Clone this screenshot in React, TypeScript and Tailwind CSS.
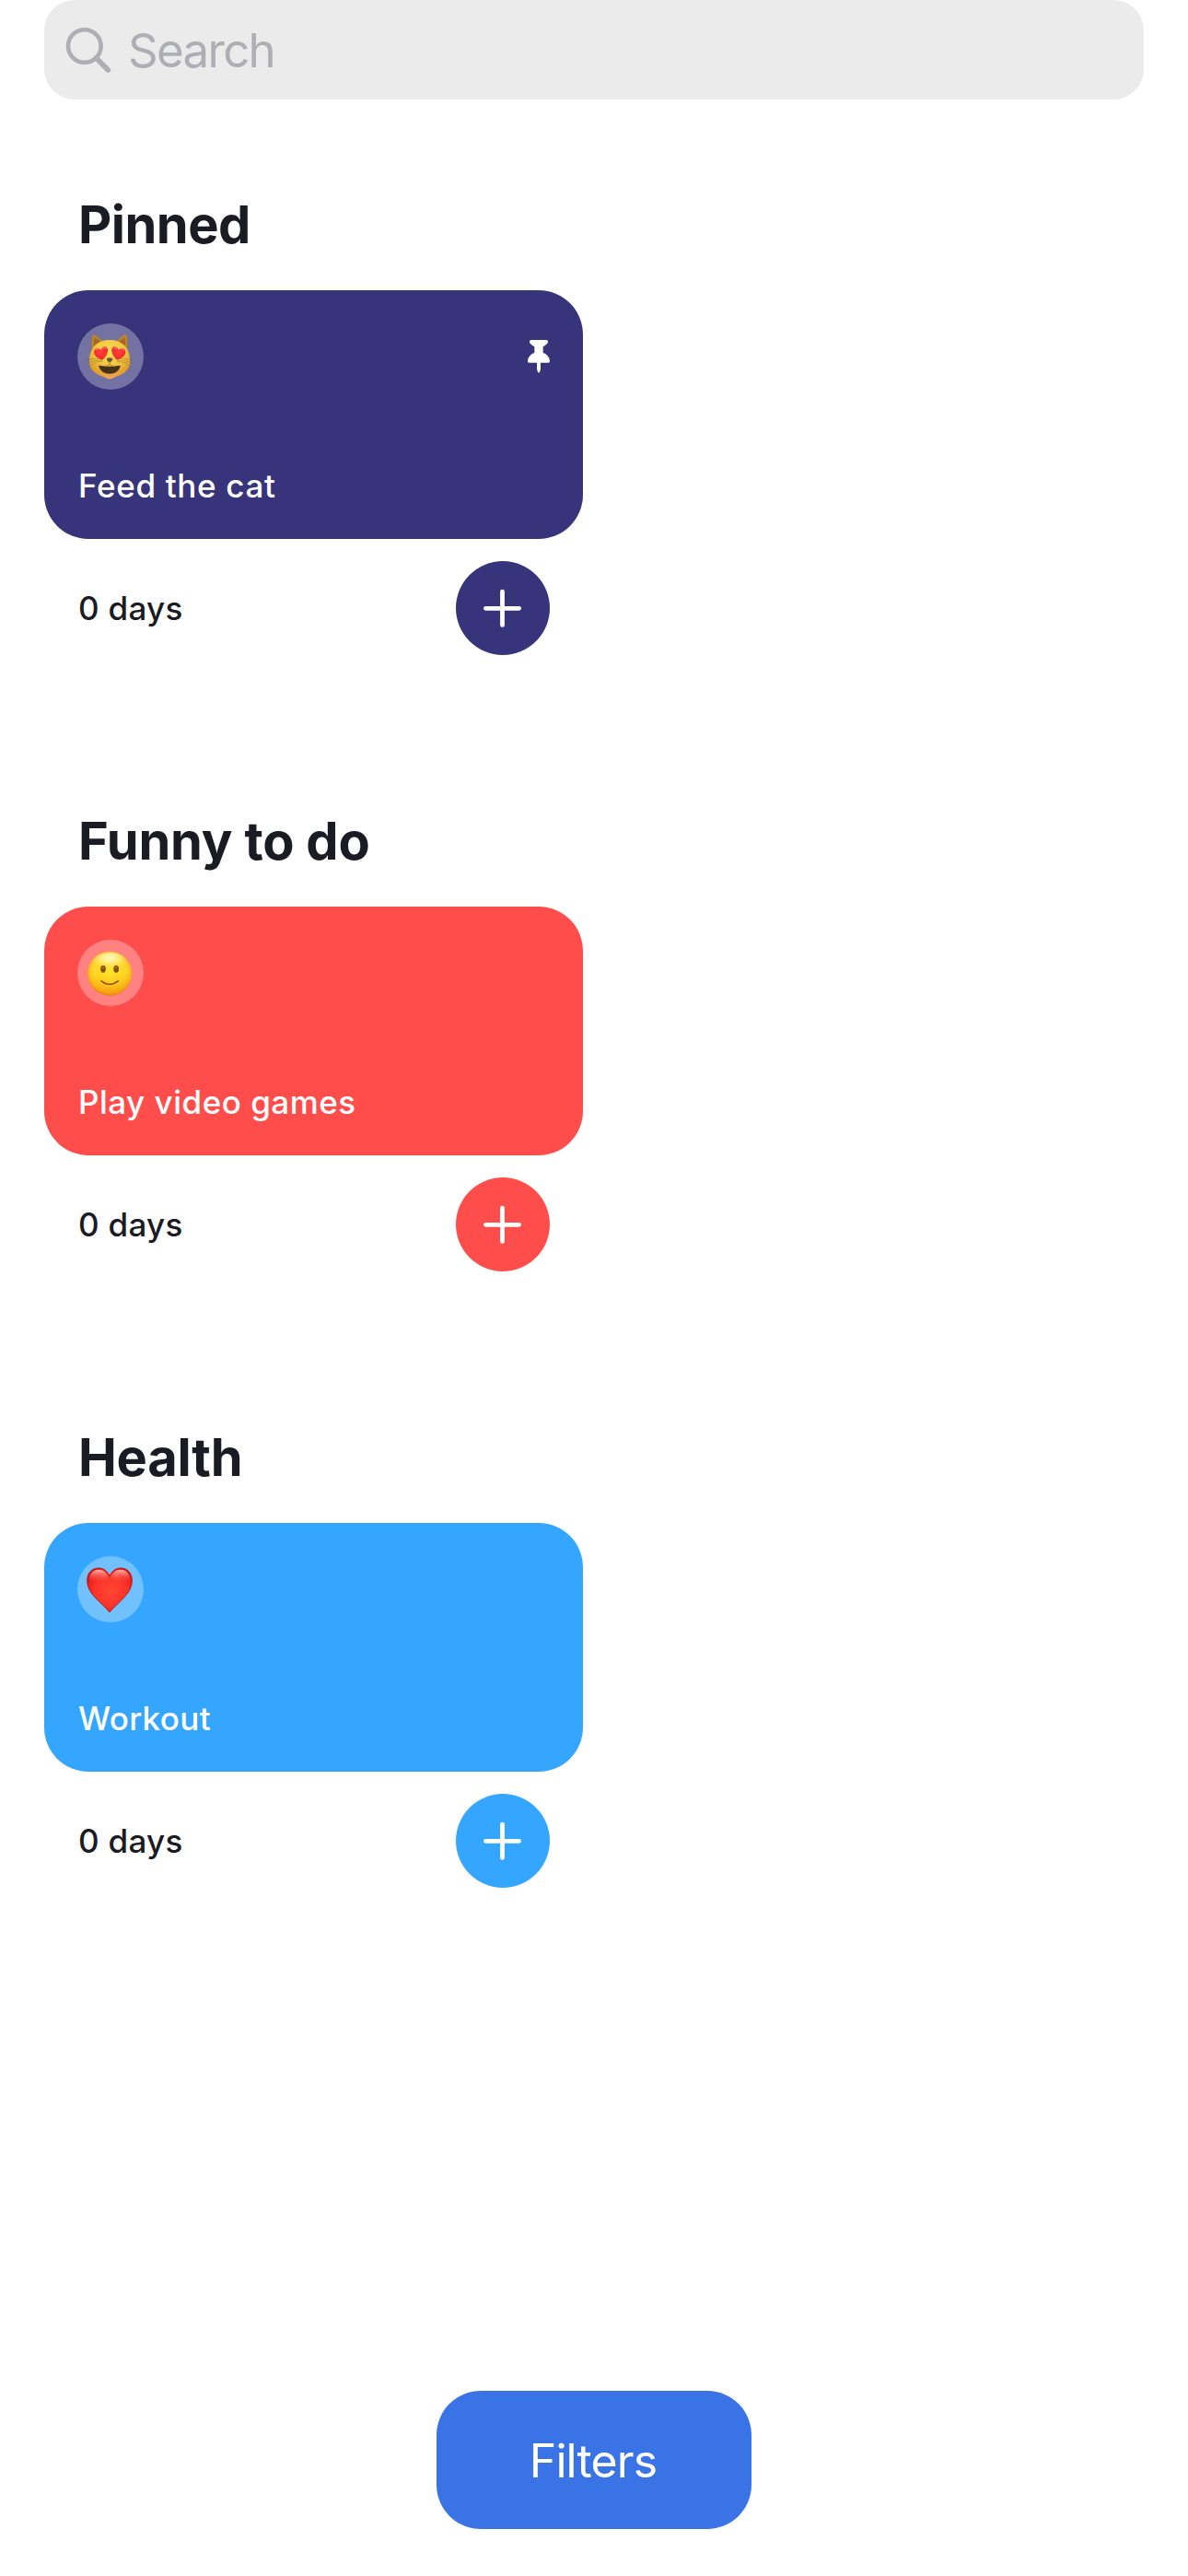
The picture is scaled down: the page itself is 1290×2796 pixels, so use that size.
import type { ReactNode } from "react";

function SearchIcon() {
  return (
    <svg className="h-[54px] w-[54px] shrink-0" viewBox="0 0 54 54" fill="none" stroke="#aeaeb5" aria-hidden="true">
      <circle cx="23.8" cy="23" r="17.8" strokeWidth="4.6" />
      <path d="M36.5 36 49.3 49" strokeWidth="5.6" strokeLinecap="round" />
    </svg>
  );
}

function PinIcon() {
  return (
    <svg className="h-9 w-6" viewBox="0 0 72 108" fill="#fff" aria-hidden="true">
      <path d="M12 0H61Q66 0 66 5V8Q65 12 50 22V42C62 46 72 56 72 70Q72 74 67 74H42V94Q41 104 36 108Q31 104 30 94V74H5Q0 74 0 70C0 56 10 46 22 42V22Q7 12 6 8V5Q6 0 12 0Z" />
    </svg>
  );
}

function PlusIcon() {
  return (
    <svg className="h-[42px] w-[42px]" viewBox="0 0 42 42" stroke="#fff" strokeWidth="4.8" strokeLinecap="round" aria-hidden="true">
      <path d="M2.4 21.3H38.6M20.5 3.2V39.4" />
    </svg>
  );
}

function CatEmoji() {
  return (
    <svg className="size-full" viewBox="42 453 216 216" aria-hidden="true">
      <defs>
        <radialGradient id="catFace" cx="0.5" cy="0.3" r="0.72">
          <stop offset="0" stopColor="#fbdf58" />
          <stop offset="0.5" stopColor="#efc63e" />
          <stop offset="0.82" stopColor="#dfa026" />
          <stop offset="1" stopColor="#c47e1a" />
        </radialGradient>
        <linearGradient id="catChin" x1="0" y1="0" x2="0" y2="1">
          <stop offset="0.75" stopColor="#f0a848" stopOpacity="0" />
          <stop offset="1" stopColor="#f2a765" />
        </linearGradient>
        <radialGradient id="catHeart" cx="0.5" cy="0.4" r="0.65">
          <stop offset="0" stopColor="#ff4237" />
          <stop offset="0.7" stopColor="#f72d30" />
          <stop offset="1" stopColor="#d91c24" />
        </radialGradient>
      </defs>
      <path d="M90 543Q87 512 92 492Q94 487 100 491L128 512Z" fill="#c0851e" />
      <path d="M204 543Q207 512 202 492Q200 487 194 491L166 512Z" fill="#c0851e" />
      <path d="M97 530Q94 512 98 499L119 514Z" fill="#a4652b" />
      <path d="M197 530Q200 512 196 499L175 514Z" fill="#a4652b" />
      <path d="M147 507C185 507 214 530 214 577C214 606 194 617 174 624C160 629 156 634 147 634C138 634 134 629 120 624C100 617 81 606 81 577C81 530 109 507 147 507Z" fill="url(#catFace)" />
      <path d="M147 507C185 507 214 530 214 577C214 606 194 617 174 624C160 629 156 634 147 634C138 634 134 629 120 624C100 617 81 606 81 577C81 530 109 507 147 507Z" fill="url(#catChin)" />
      <path d="M124 574C108 574 92 573 75 584M124 577C106 577 91 582 80 597M171 574C187 574 203 573 222 584M171 577C189 577 204 582 215 597M123 571C108 567 90 567 73 573M172 571C187 567 205 567 221 573" fill="none" stroke="#765a32" strokeWidth="1.4" opacity="0.75" />
      <path d="M112 590Q147 596 180 590Q183 590 181 596Q172 617 147 617Q122 617 113 596Q110 590 112 590Z" fill="#453219" />
      <path d="M138 567Q147 562 157 567Q158 573 151 578Q147 581 143 578Q136 573 138 567Z" fill="#70563d" />
      <path d="M147 579V586Q143 592 136 590M147 586Q151 592 158 590" fill="none" stroke="#7a4a15" strokeWidth="1.6" />
      <path d="M119 539C123 526 140 525 141 538C142 552 133 563 125 571C116 570 101 564 97 551C93 537 108 528 119 539Z" fill="url(#catHeart)" />
      <path d="M176 539C172 526 155 525 154 538C153 552 162 563 170 571C179 570 194 564 198 551C202 537 187 528 176 539Z" fill="url(#catHeart)" />
      <path d="M102 540Q106 534 111 536M125 535Q131 530 136 534M159 534Q164 530 170 535M184 536Q189 534 193 540" fill="none" stroke="#ff8a76" strokeWidth="3" strokeLinecap="round" />
    </svg>
  );
}

function SmileEmoji() {
  return (
    <svg className="size-full" viewBox="42 450 216 216" aria-hidden="true">
      <defs>
        <linearGradient id="smileBase" x1="0" y1="0" x2="0" y2="1">
          <stop offset="0" stopColor="#ffe04a" />
          <stop offset="0.5" stopColor="#ffdb25" />
          <stop offset="0.8" stopColor="#ffb917" />
          <stop offset="1" stopColor="#ef9410" />
        </linearGradient>
        <radialGradient id="smileRim" cx="0.5" cy="0.48" r="0.52">
          <stop offset="0" stopColor="#ffee30" stopOpacity="0.7" />
          <stop offset="0.65" stopColor="#ffc51a" stopOpacity="0.15" />
          <stop offset="0.9" stopColor="#f29a12" stopOpacity="0.45" />
          <stop offset="1" stopColor="#d9780d" stopOpacity="0.85" />
        </radialGradient>
        <radialGradient id="smileShine" cx="0.5" cy="0.25" r="0.6">
          <stop offset="0" stopColor="#fffbd0" stopOpacity="0.9" />
          <stop offset="0.4" stopColor="#fff6a8" stopOpacity="0.7" />
          <stop offset="1" stopColor="#ffee60" stopOpacity="0" />
        </radialGradient>
      </defs>
      <circle cx="147.5" cy="560" r="72" fill="url(#smileBase)" />
      <circle cx="147.5" cy="560" r="72" fill="url(#smileRim)" />
      <ellipse cx="147.5" cy="524" rx="54" ry="32" fill="url(#smileShine)" />
      <ellipse cx="126" cy="545.5" rx="8.5" ry="12" fill="#875009" />
      <ellipse cx="168.5" cy="545.5" rx="8.5" ry="12" fill="#875009" />
      <ellipse cx="126" cy="540" rx="3.5" ry="4" fill="#ad7620" />
      <ellipse cx="168.5" cy="540" rx="3.5" ry="4" fill="#ad7620" />
      <path d="M120 584Q147 606 175 584" fill="none" stroke="#7b480b" strokeWidth="4" strokeLinecap="round" />
    </svg>
  );
}

function HeartEmoji() {
  return (
    <svg className="size-full" viewBox="42 447 216 216" aria-hidden="true">
      <defs>
        <radialGradient id="heartFill" gradientUnits="userSpaceOnUse" cx="150" cy="560" r="85">
          <stop offset="0" stopColor="#ff4632" />
          <stop offset="0.6" stopColor="#fb342a" />
          <stop offset="0.85" stopColor="#ea201c" />
          <stop offset="1" stopColor="#c91614" />
        </radialGradient>
        <linearGradient id="heartShine" x1="0" y1="0" x2="0" y2="1">
          <stop offset="0" stopColor="#ffc0b5" stopOpacity="0.95" />
          <stop offset="1" stopColor="#ff5548" stopOpacity="0" />
        </linearGradient>
      </defs>
      <path d="M147 513C153 496 167 486 183 486C205 486 220 502 220 527C220 571 173 597 147 630C121 597 74 571 74 527C74 502 89 486 111 486C127 486 141 496 147 513Z" fill="url(#heartFill)" stroke="#bd1b1b" strokeWidth="3" strokeLinejoin="round" />
      <path d="M80 528C79 504 94 491 111 491C127 491 138 501 143 519C125 530 95 534 80 528Z" fill="url(#heartShine)" />
      <path d="M214 528C215 504 200 491 183 491C167 491 156 501 151 519C169 530 199 534 214 528Z" fill="url(#heartShine)" />
    </svg>
  );
}

type Habit = {
  section: string;
  title: string;
  color: string;
  titleTracking: string;
  sectionTracking: string;
  emoji: ReactNode;
  pinned?: boolean;
};

const habits: Habit[] = [
  { section: "Pinned", title: "Feed the cat", color: "bg-[#38347b]", titleTracking: "tracking-[0.65px]", sectionTracking: "tracking-[-0.5px]", emoji: <CatEmoji />, pinned: true },
  { section: "Funny to do", title: "Play video games", color: "bg-[#ff4d4b]", titleTracking: "tracking-[0.5px]", sectionTracking: "tracking-[-0.2px]", emoji: <SmileEmoji /> },
  { section: "Health", title: "Workout", color: "bg-[#35a6ff]", titleTracking: "tracking-[0.35px]", sectionTracking: "tracking-[-0.25px]", emoji: <HeartEmoji /> },
];

function HabitSection({ habit }: { habit: Habit }) {
  return (
    <section className="h-[669px] w-[585px]">
      <h2 className={`mb-[37px] pl-[37px] text-[56px] leading-[68px] font-bold whitespace-nowrap ${habit.sectionTracking}`}>{habit.section}</h2>
      <div className={`flex h-[270px] flex-col justify-between rounded-[48px] px-9 pt-9 pb-[37px] ${habit.color}`}>
        <div className="flex items-center justify-between">
          <span className="size-[72px] overflow-hidden rounded-full bg-white/30">{habit.emoji}</span>
          {habit.pinned && <PinIcon />}
        </div>
        <p className={`pl-px text-[35px] leading-[42px] font-medium whitespace-nowrap text-white ${habit.titleTracking}`}>{habit.title}</p>
      </div>
      <div className="mt-6 flex items-center justify-between px-9">
        <span className="pl-px text-[35px] leading-[42px] font-medium tracking-[0.3px]">0 days</span>
        <button aria-label="Add day" className={`flex size-[102px] items-center justify-center rounded-full ${habit.color}`}>
          <PlusIcon />
        </button>
      </div>
    </section>
  );
}

export default function App() {
  return (
    <div className="flex h-[2796px] w-[1290px] flex-col bg-white px-12 font-['Inter',sans-serif] text-[#1b1b23]">
      <div className="flex h-[108px] w-[1194px] shrink-0 items-center rounded-[33px] bg-[#ebebeb] pl-5">
        <SearchIcon />
        <span className="ml-[17px] text-[51px] leading-[61px] tracking-[-1.7px] text-[#aeaeb5]">Search</span>
      </div>
      <main className="mt-[102px] flex flex-col">
        {habits.map((habit) => (
          <HabitSection key={habit.section} habit={habit} />
        ))}
      </main>
      <button className="mt-auto mb-[51px] flex h-[150px] w-[342px] items-center justify-center self-center rounded-[48px] bg-[#3973e6] pt-0.5 pr-0.5 text-[50px] leading-[60px] tracking-[-0.9px] text-white">
        Filters
      </button>
    </div>
  );
}
